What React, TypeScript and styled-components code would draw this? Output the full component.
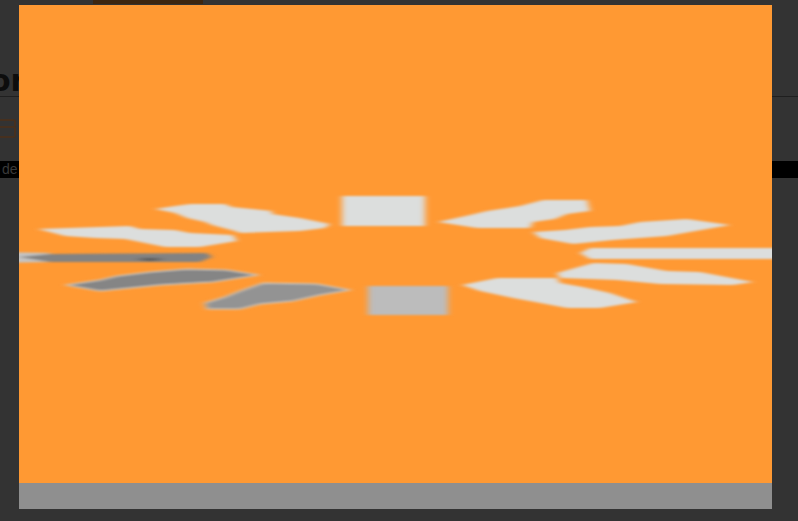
import React from 'react';
import styled, { createGlobalStyle } from 'styled-components';

const GlobalStyle = createGlobalStyle`
  * {
    margin: 0;
    padding: 0;
    box-sizing: border-box;
  }
  html, body, #root {
    height: 100%;
  }
  body {
    font-family: "Liberation Sans", Arial, sans-serif;
    background-color: #333333;
    overflow: hidden;
  }
`;

const Page = styled.div`
  position: relative;
  height: 100vh;
  display: flex;
  flex-direction: column;
  overflow: hidden;
`;

const TabRow = styled.div`
  height: 4px;
  padding-left: 93px;
`;

const ActiveTab = styled.div`
  width: 110px;
  height: 100%;
  background: #3d2610;
`;

const Header = styled.header`
  height: 93px;
  border-bottom: 1px solid #1f1f1f;
  display: flex;
  align-items: flex-end;
`;

const Logo = styled.div`
  margin-left: -10px;
  font-family: "DejaVu Sans", sans-serif;
  font-size: 30px;
  line-height: 30px;
  font-weight: 700;
  color: #0d0d0d;
`;

const SubRow = styled.div`
  height: 64px;
  padding-top: 22px;
  display: flex;
  flex-direction: column;
`;

const PillBar = styled.div<{ $tall?: boolean }>`
  width: 16px;
  height: ${({ $tall }) => ($tall ? '12px' : '9px')};
  margin-top: ${({ $tall }) => ($tall ? '-2px' : '0')};
  border: 2px solid #46301f;
  border-left: none;
  border-radius: 0 3px 3px 0;
`;

const Ticker = styled.div`
  height: 17px;
  background: #000000;
  color: #3a3a3a;
  font-size: 14px;
  line-height: 17px;
  padding-left: 2px;
  white-space: nowrap;
`;

const Lightbox = styled.div`
  position: absolute;
  top: 5px;
  left: 19px;
  width: 753px;
  height: 504px;
  display: flex;
  flex-direction: column;
  background: #909090;
`;

const Photo = styled.svg`
  display: block;
  width: 100%;
  height: 478px;
  flex-shrink: 0;
  background: #ff9933;
`;

const Caption = styled.div`
  flex: 1;
  background: #8f8f8f;
`;

const light = '#dcdedd';
const blades: { points: string; fill: string; halo?: boolean }[] = [
  { fill: light, points: '155,209 175,206 190,204 225,204 232,207 272,211 272,214 300,218 330,224 325,228 300,231 240,233 235,231 212,225 205,222 187,218 175,213' },
  { fill: light, points: '38,229 130,226 140,229 175,230 190,233 233,235 237,241 200,247 165,247 125,239 95,238 65,236' },
  { fill: '#c4c4c4', points: '0,252 50,253 50,262 0,263' },
  { fill: '#828282', points: '19,257 50,254 207,253 212,257 200,262 50,262' },
  { fill: '#555555', points: '135,259 150,258 165,259 150,261' },
  { fill: '#858585', halo: true, points: '66,285 100,280 117,276 150,272 187,269 227,270 258,275 213,282 160,285 130,288 100,291' },
  { fill: '#939393', halo: true, points: '205,303 225,297 240,291 263,283 317,284 350,290 320,295 293,301 260,304 240,309 207,309' },
  { fill: light, points: '342,196 425,196 425,226 342,226' },
  { fill: '#bcbcbc', points: '368,286 448,286 448,315 368,315' },
  { fill: light, points: '438,222 470,215 487,211 520,206 543,200 587,200 590,211 567,214 555,219 533,222 530,228 477,228' },
  { fill: light, points: '533,232 565,230 590,227 620,226 640,222 687,219 730,225 690,232 667,236 613,240 573,244 540,238' },
  { fill: light, points: '580,253 590,248 800,248 800,259 590,259' },
  { fill: light, points: '557,273 575,268 593,263 627,264 667,271 700,272 753,282 733,285 660,284 617,280 560,278' },
  { fill: light, points: '462,285 497,278 557,278 560,283 583,287 610,293 637,302 600,308 567,308 535,302 513,298 480,291' },
];

const App: React.FC = () => {
  return (
    <>
      <GlobalStyle />
      <Page>
        <TabRow>
          <ActiveTab />
        </TabRow>
        <Header>
          <Logo>or</Logo>
        </Header>
        <SubRow>
          <PillBar />
          <PillBar $tall />
        </SubRow>
        <Ticker>de</Ticker>
        <Lightbox>
          <Photo viewBox="19 5 753 478" preserveAspectRatio="none">
            <defs>
              <filter id="soft" x="-5%" y="-20%" width="110%" height="140%">
                <feGaussianBlur stdDeviation="3 1" />
              </filter>
            </defs>
            <g filter="url(#soft)">
              {blades.map((b) => (
                <polygon
                  key={b.points}
                  points={b.points}
                  fill={b.fill}
                  stroke={b.halo ? '#d4d4d4' : 'none'}
                  strokeWidth={b.halo ? 1.2 : 0}
                />
              ))}
            </g>
          </Photo>
          <Caption />
        </Lightbox>
      </Page>
    </>
  );
};

export default App;
